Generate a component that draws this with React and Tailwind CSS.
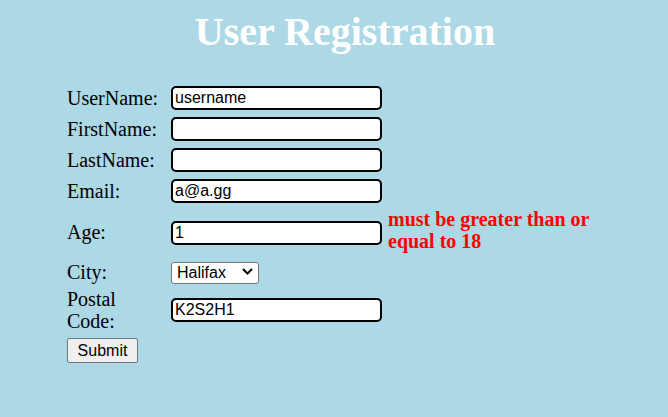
import React from 'react';

const serif = "font-['Liberation_Serif','Times_New_Roman',serif]";
const sans = "font-['Liberation_Sans',Arial,sans-serif]";

function Field({ value }) {
  return (
    <input
      type="text"
      defaultValue={value}
      className={`${sans} h-[24px] w-[211px] rounded-[5px] border-2 border-black bg-white px-[2px] text-[16px] text-black outline-none`}
    />
  );
}

function Label({ children }) {
  return <label className={`${serif} block w-[100px] shrink-0 text-[20px] leading-[22px] text-black`}>{children}</label>;
}

export default function App() {
  return (
    <div className="min-h-screen w-full bg-[#add8e6]">
      <h1 className={`${serif} flex justify-center pt-[9px] pl-[22px] text-[40px] font-bold leading-[46px] text-white`}>
        User Registration
      </h1>

      <form className="mt-[27px] flex flex-col pl-[67px]" onSubmit={(e) => e.preventDefault()}>
        <div className="flex h-[31px] items-center gap-[4px]">
          <Label>UserName:</Label>
          <Field value="username" />
        </div>
        <div className="flex h-[31px] items-center gap-[4px]">
          <Label>FirstName:</Label>
          <Field value="" />
        </div>
        <div className="flex h-[31px] items-center gap-[4px]">
          <Label>LastName:</Label>
          <Field value="" />
        </div>
        <div className="flex h-[31px] items-center gap-[4px]">
          <Label>Email:</Label>
          <Field value="a@a.gg" />
        </div>

        {/* age row with validation message */}
        <div className="flex h-[50px] items-start gap-[4px]">
          <div className="mt-[15px] w-[100px] shrink-0">
            <Label>Age:</Label>
          </div>
          <div className="mt-[13.5px] shrink-0">
            <Field value="1" />
          </div>
          <p className={`${serif} ml-[2px] mt-[1.5px] w-[215px] text-[20px] font-bold leading-[22px] text-[#ff0000]`}>
            must be greater than or equal to 18
          </p>
        </div>

        <div className="flex h-[31px] items-center gap-[4px]">
          <Label>City:</Label>
          <div className="relative">
            <select
              defaultValue="Halifax"
              className={`${sans} h-[22px] w-[88px] appearance-none rounded-[3px] border border-[#767676] bg-white pl-[5px] text-[16px] leading-[20px] text-black`}
            >
              <option>Halifax</option>
              <option>Toronto</option>
              <option>Ottawa</option>
            </select>
            <svg className="pointer-events-none absolute right-[6px] top-[8px]" width="11" height="7" viewBox="0 0 11 7">
              <path d="M1 1l4.5 4.5L10 1" fill="none" stroke="#000" strokeWidth="2" />
            </svg>
          </div>
        </div>

        <div className="flex h-[45.5px] items-center gap-[4px]">
          <Label>Postal Code:</Label>
          <Field value="K2S2H1" />
        </div>

        <div className="mt-[5px]">
          <button
            type="submit"
            className={`${sans} h-[25px] w-[71px] rounded-[2px] border border-[#767676] bg-[#efefef] text-[16px] leading-[23px] text-black`}
          >
            Submit
          </button>
        </div>
      </form>
    </div>
  );
}
